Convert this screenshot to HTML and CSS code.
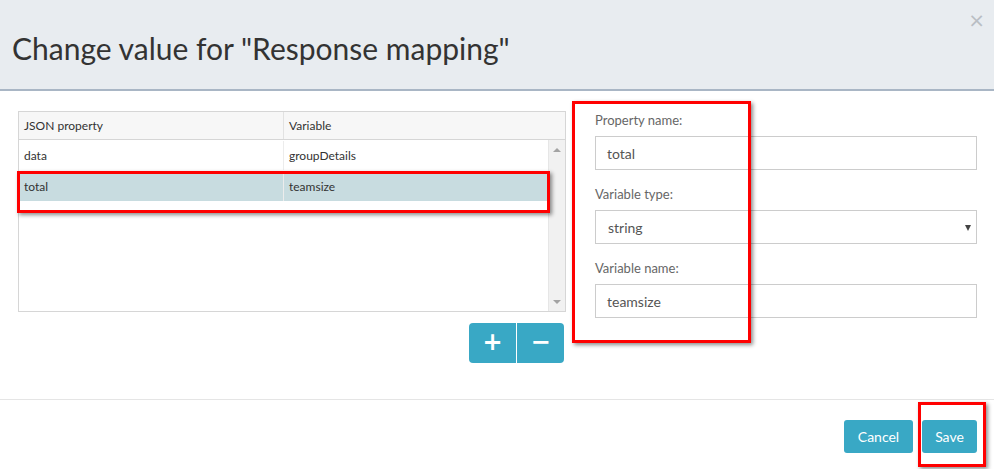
FILE: index.html
```html
<!DOCTYPE html>
<html>
<head>
<meta charset="utf-8">
<link rel="stylesheet" href="styles.css">
</head>
<body>
<div class="modal">
  <div class="header">
    <h1 class="title">Change value for "Response mapping"</h1>
    <span class="close">×</span>
  </div>
  <div class="body">
    <div class="left">
      <div class="grid">
        <div class="grid-head">
          <div class="cell c1">JSON property</div>
          <div class="cell c2">Variable</div>
          <div class="sb-head"></div>
        </div>
        <div class="grid-main">
          <div class="rows">
            <div class="row"><div class="cell c1">data</div><div class="cell c2">groupDetails</div></div>
            <div class="row selected"><div class="cell c1">total</div><div class="cell c2">teamsize</div></div>
          </div>
          <div class="scrollbar">
            <span class="arrow up"></span>
            <span class="arrow down"></span>
          </div>
        </div>
      </div>
      <div class="btn-group">
        <button class="btn grp">+</button>
        <button class="btn grp">−</button>
      </div>
      <div class="mark mark-row"></div>
    </div>
    <div class="form">
      <label class="label">Property name:</label>
      <div class="input">total</div>
      <label class="label">Variable type:</label>
      <div class="input select">string<span class="caret"></span></div>
      <label class="label">Variable name:</label>
      <div class="input">teamsize</div>
      <div class="mark mark-form"></div>
    </div>
  </div>
  <div class="footer">
    <button class="btn act cancel">Cancel</button>
    <button class="btn act save">Save</button>
    <div class="mark mark-save"></div>
  </div>
</div>
</body>
</html>
```

FILE: styles.css
```css
* { box-sizing: border-box; }
html, body { margin: 0; padding: 0; background: #fff; }
body { font-family: Lato, "Open Sans", sans-serif; color: #333; }
.modal { width: 994px; height: 469px; position: relative; overflow: hidden; }

.header {
  height: 91px;
  background: #e8ecf0;
  border-bottom: 2px solid #a9b6c5;
  position: relative;
  display: flex;
  align-items: center;
}
.title {
  margin: 0 0 0 12px;
  font-weight: 400;
  font-size: 30px;
  color: #333;
  letter-spacing: 0;
  padding-top: 6px;
}
.close {
  position: absolute;
  right: 9px;
  top: 8px;
  font-size: 20px;
  color: #b9bec4;
  font-family: "DejaVu Sans", sans-serif;
}

.body {
  display: flex;
  padding: 20px 0 0 18px;
  height: 308px;
}
.left { width: 548px; position: relative; }
.grid {
  width: 548px;
  height: 201px;
  border: 1px solid #d6d6d6;
  display: flex;
  flex-direction: column;
  font-size: 12px;
}
.grid-head {
  display: flex;
  height: 28px;
  background: #f7f7f7;
  border-bottom: 1px solid #d6d6d6;
}
.grid-head .cell { color: #333; }
.cell { padding: 0 5px; display: flex; align-items: center; }
.c1 { width: 265px; border-right: 1px solid #e2e2e2; }
.c2 { flex: 1; }
.sb-head { width: 17px; }
.grid-main { flex: 1; display: flex; }
.rows { flex: 1; padding-top: 1px; }
.row { display: flex; height: 29px; color: #333; }
.row .c1 { border-right: 1px solid #ececec; }
.row.selected { background: #c8dce0; margin-top: 2px; }
.scrollbar {
  width: 17px;
  background: #f1f1f1;
  border-left: 1px solid #e6e6e6;
  display: flex;
  flex-direction: column;
  justify-content: space-between;
  align-items: center;
  padding: 8px 0 7px;
}
.arrow { width: 0; height: 0; border-left: 4px solid transparent; border-right: 4px solid transparent; }
.arrow.up { border-bottom: 4px solid #a3a3a3; }
.arrow.down { border-top: 4px solid #a3a3a3; }

.btn-group {
  display: flex;
  justify-content: flex-end;
  margin: 11px 2px 0 0;
}
.btn {
  font-family: Lato, "Open Sans", sans-serif;
  border: none;
  background: #39a8c5;
  color: #fff;
  cursor: pointer;
}
.btn.grp {
  width: 47px;
  height: 40px;
  font-size: 24px;
  font-weight: 900;
  line-height: 1;
  padding: 0 0 2px;
  font-family: "DejaVu Sans", sans-serif;
}
.btn.grp:first-child { border-radius: 4px 0 0 4px; border-right: 1px solid #fff; width: 48px; }
.btn.grp:last-child { border-radius: 0 4px 4px 0; }

.form {
  flex: 1;
  padding: 0 17px 0 29px;
  position: relative;
}
.label {
  display: block;
  font-size: 13px;
  color: #666;
  height: 25px;
  line-height: 19px;
  padding-top: 0;
}
.input {
  height: 34px;
  border: 1px solid #ccc;
  font-size: 14px;
  color: #555;
  padding: 0 11px;
  display: flex;
  align-items: center;
  margin-bottom: 15px;
  position: relative;
}
.select { padding-left: 12px; }
.caret {
  position: absolute;
  right: 5px;
  top: 14px;
  border-left: 3px solid transparent;
  border-right: 3px solid transparent;
  border-top: 6px solid #444;
}

.footer {
  border-top: 1px solid #e5e5e5;
  height: 70px;
  display: flex;
  justify-content: flex-end;
  align-items: flex-start;
  padding: 20px 17px 0 0;
  gap: 9px;
  position: relative;
}
.btn.act {
  height: 33px;
  font-size: 14px;
  border-radius: 3px;
  padding: 0 12px;
}
.cancel { width: 69px; }
.save { width: 55px; }

.mark {
  position: absolute;
  border: 3px solid #ff0000;
  box-shadow: 2px 2px 4px rgba(0,0,0,0.45);
  pointer-events: none;
}
.mark-row { left: -1px; top: 60px; width: 533px; height: 42px; }
.mark-form { left: 6px; top: -10px; width: 179px; height: 242px; }
.mark-save { right: 8px; top: 2px; width: 68px; height: 65px; }
```
